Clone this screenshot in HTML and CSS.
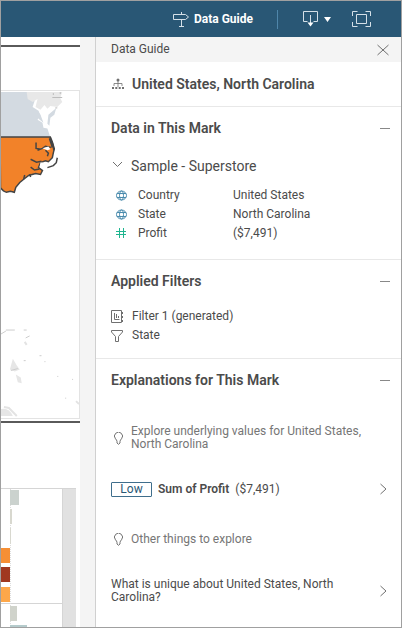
FILE: index.html
```html
<!DOCTYPE html>
<html lang="en">
<head>
    <meta charset="UTF-8">
    <meta name="viewport" content="width=device-width, initial-scale=1.0">
    <title>Data Guide</title>
    <link rel="stylesheet" href="styles.css">
</head>
<body>
    <header class="toolbar">
        <button class="guide-btn">
            <svg width="16" height="16" viewBox="0 0 16 16">
                <path d="M.5 3.500h12l3 2.500-3 2.500h-12zM8.500 1v2.500M8.500 8.500v6.500M6 15.500h5" />
            </svg>
            Data Guide
        </button>
        <span class="divider"></span>
        <button class="download" aria-label="Download">
            <svg width="28" height="16" viewBox="0 0 28 16">
                <path d="M4.500 10.500h-4v-10h14v10h-4M7.500 4v9" />
                <path class="solid" d="M4.500 11.500h6l-3 4zM21 6h7l-3.500 5z" />
            </svg>
        </button>
        <button class="fullscreen" aria-label="Full screen">
            <svg width="19" height="16" viewBox="0 0 19 16">
                <path d="M4.500 3.500h10v9h-10zM.5 5v-4.500h5M13.500.5h5v4.500M18.500 11v4.500h-5M5.500 15.500h-5v-4.500" />
            </svg>
        </button>
    </header>

    <main class="main">
        <!-- dashboard behind the panel -->
        <div class="dashboard">
            <div class="map">
                <svg width="79" height="329" viewBox="1 90 79 329">
                    <path fill="#d3dae1" d="M1 90h27l2 5 5 4-2 6 6 4 2 5-3 4 5 3 1 5 4 1 3 9H1z" />
                    <path fill="#e8e8e8" d="M27 90h36l-2 6 2 4-5 5-7-1-3 3-3-4-4 5-5-3 2-8-5 3-5-3z" />
                    <path fill="#d3dae1" d="M49 113l8-7-2 7-4 3-1 8-2-2zM44 121l-3-8-3-4 1 8z" />
                    <path stroke="#bbb" d="M53 95.500h10M54 91v2M61 92v-2M56 106h2" />
                    <path class="state" d="M0 135.500h51l2 5 2 7-1 4-1 5-4 4-3-1-5 2-2 5 4 3-2 4-5-1-7 2-4 3-5 4-4 5-1.500 5-4-1-4 1-3-1.500-3-3z" />
                    <path class="coast" d="M50.500 136l3 7 1 6M36.500 141v6l5 1M38 149l5-2 3-2 6 1M46 149l3 3-1 3M50 137l3 9M31 158l6 3 5-1M31 166l4 3 5-1M25 174l-1 4M30 173l1 3" />
                    <path fill="#fff" d="M43 147l6-2 2 3-3 1zM41 161l5 1-4 5-2-1z" />
                    <path class="coast" d="M48 166.500l6-2 3-3 1-5" />
                    <path fill="#e6e6e6" d="M13 360l4 7 3 4-5 2-5-2zM16 376l5 3 1 6-4-1z" />
                    <path fill="#e6e6e6" d="M1 411q8-2 12 7H1z" />
                    <path stroke="#e3e3e3" stroke-width="2" d="M4 409l5 1 8 8M25 343l2 3M77 403l3 3" />
                    <path stroke="#ccc" d="M1 335l5-3M6 331h9M26 339l4-2M24 331h3M11 372l7-2M40 357h2M45 363h1M58 378h1M73 381h1M66 400h1M24 362h2" />
                </svg>
            </div>
            <div class="chart">
                <svg width="79" height="139" viewBox="1 488 79 139">
                    <path fill="#e1e1e1" d="M63 488h13v139H63z" />
                    <path stroke="#d5d5d5" d="M1 488.500h75M62.500 488v139M1 603.500h62" />
                    <path stroke="#ddd" stroke-dasharray="1 1" d="M10.500 489v138" />
                    <path fill="#cbd2ce" d="M10 490h9v15h-9z" />
                    <path fill="#d8d8cf" d="M10 509h2v15h-2zM10 528h1v16h-1z" />
                    <path fill="#f68f35" d="M1 548h9v15H1z" />
                    <path fill="#a03820" d="M1 567h9v15H1z" />
                    <path fill="#fda74a" d="M1 587h9v15H1z" />
                    <path fill="#d0d3cb" d="M10 606h7v15h-7z" />
                    <path fill="#b5cbcc" d="M10 625h17v2H10z" />
                </svg>
            </div>
        </div>

        <aside class="panel">
            <div class="panel-head">
                <span>Data Guide</span>
                <button aria-label="Close">
                    <svg width="12" height="12" viewBox="0 0 12 12"><path d="M.5 1l11 10M11.500 1l-11 10" /></svg>
                </button>
            </div>

            <h1 class="mark">
                <svg width="12" height="12" viewBox="0 0 12 12">
                    <path stroke-width=".8" d="M6 2v7M2 8v-2.500h8V8" />
                    <circle class="solid" cx="6" cy="2" r="1.500" />
                    <path class="solid" d="M0 9h2v2H0zM3.300 9h2v2h-2zM6.700 9h2v2h-2zM10 9h2v2h-2z" />
                </svg>
                United States, North Carolina
            </h1>

            <section class="data">
                <div class="section-head">
                    <h2>Data in This Mark</h2>
                    <button class="collapse" aria-label="Collapse"></button>
                </div>
                <button class="source">
                    <svg width="12" height="12" viewBox="0 0 12 12"><path d="M2 2l4.500 4.500L11 2" /></svg>
                    Sample - Superstore
                </button>
                <table>
                    <tr>
                        <th><span><svg class="geo" width="11" height="11" viewBox="0 0 11 11"><ellipse cx="5.500" cy="5.500" rx="5" ry="4.500" /><path d="M1 3.500h9M1 7.500h9" /><ellipse cx="5.500" cy="5.500" rx="2" ry="4.500" /></svg>Country</span></th>
                        <td>United States</td>
                    </tr>
                    <tr>
                        <th><span><svg class="geo" width="11" height="11" viewBox="0 0 11 11"><ellipse cx="5.500" cy="5.500" rx="5" ry="4.500" /><path d="M1 3.500h9M1 7.500h9" /><ellipse cx="5.500" cy="5.500" rx="2" ry="4.500" /></svg>State</span></th>
                        <td>North Carolina</td>
                    </tr>
                    <tr>
                        <th><span><svg class="num" width="11" height="11" viewBox="0 0 11 11"><path d="M3.500 0v10M7.500 0v10M0 3.500h10M0 6.500h10" /></svg>Profit</span></th>
                        <td>($7,491)</td>
                    </tr>
                </table>
            </section>

            <section class="filters">
                <div class="section-head">
                    <h2>Applied Filters</h2>
                    <button class="collapse" aria-label="Collapse"></button>
                </div>
                <ul>
                    <li>
                        <svg width="13" height="13" viewBox="0 0 13 13"><path d="M.5.500h10v12h-10zM3.500 3v6.500h5M5.500 4v4M7.500 6v2M11.500 2v2M11.500 6v2M11.500 10v2" /></svg>
                        Filter 1 (generated)
                    </li>
                    <li>
                        <svg width="13" height="13" viewBox="0 0 13 13"><path d="M.5 1.500h11v1.500L7.500 7.500v5h-3v-5L.5 3z" /></svg>
                        State
                    </li>
                </ul>
            </section>

            <section class="explain">
                <div class="section-head">
                    <h2>Explanations for This Mark</h2>
                    <button class="collapse" aria-label="Collapse"></button>
                </div>
                <p class="hint">
                    <svg width="9" height="13" viewBox="0 0 9 13"><path d="M3 9.500Q2.800 8 1.500 6.800A4 4 0 1 1 7.500 6.800Q6.200 8 6 9.500V11L4.500 12.300 3 11z" /></svg>
                    Explore underlying values for United States, North Carolina
                </p>
                <button class="item">
                    <span class="low">Low</span>
                    <b>Sum of Profit</b>
                    <span>($7,491)</span>
                    <svg width="7" height="12" viewBox="0 0 7 12"><path d="M.5 1l5.500 5-5.500 5" /></svg>
                </button>
                <p class="hint">
                    <svg width="9" height="13" viewBox="0 0 9 13"><path d="M3 9.500Q2.800 8 1.500 6.800A4 4 0 1 1 7.500 6.800Q6.200 8 6 9.500V11L4.500 12.300 3 11z" /></svg>
                    Other things to explore
                </p>
                <button class="item last">
                    <span class="question">What is unique about United States, North Carolina?</span>
                    <svg width="7" height="12" viewBox="0 0 7 12"><path d="M.5 1l5.500 5-5.500 5" /></svg>
                </button>
            </section>
        </aside>
    </main>
</body>
</html>
```
FILE: styles.css
```css
* {
    box-sizing: border-box;
    margin: 0;
    padding: 0;
}

body {
    display: flex;
    flex-direction: column;
    min-height: 100vh;
    border: 1px solid #a0a0a0;
    font: 12px/13px Roboto, "Liberation Sans", sans-serif;
    color: #4b4b4b;
    background: #fff;
}

button {
    border: 0;
    background: none;
    font: inherit;
    color: inherit;
    text-align: left;
    cursor: pointer;
}

svg {
    display: block;
    flex: none;
    fill: none;
}

button svg,
.panel svg {
    stroke: #707070;
}

.solid {
    fill: #707070;
    stroke: none;
}

/* toolbar */
.toolbar {
    display: flex;
    align-items: center;
    justify-content: flex-end;
    height: 36px;
    padding-right: 30px;
    background: #295775;
}

.toolbar svg {
    stroke: #d5e0e8;
}

.toolbar .solid {
    fill: #fff;
}

.guide-btn {
    display: flex;
    align-items: center;
    gap: 5px;
    font-weight: 700;
    color: #fff;
}

.divider {
    width: 1px;
    height: 19px;
    margin: 0 25px 0 24px;
    background: #4f86aa;
}

.fullscreen {
    margin-left: 21px;
}

.main {
    display: flex;
    flex: 1;
}

/* dashboard */
.dashboard {
    flex: 1;
    min-width: 0;
    padding-top: 8px;
    border-right: 15px solid #f4f4f4;
}

.dashboard svg {
    margin-left: auto;
}

.map {
    padding: 43px 0 2px;
    border-top: 2px solid #5a5a5a;
    border-bottom: 2px solid #5a5a5a;
}

.map svg {
    border: 1px solid #e3e3e3;
    border-left: 0;
}

.chart {
    padding-top: 65px;
}

.state {
    fill: #f28229;
    stroke: #444;
    stroke-width: 1.5;
}

.coast {
    stroke: #444;
    stroke-width: 1.5;
}

/* data guide panel */
.panel {
    width: 306px;
    border-left: 1px solid #d0d0d0;
}

.panel-head {
    display: flex;
    align-items: center;
    justify-content: space-between;
    height: 25px;
    padding: 0 12px 0 15px;
    background: #f4f4f4;
}

.mark {
    display: flex;
    align-items: center;
    gap: 8px;
    height: 45px;
    padding-left: 16px;
    border-bottom: 1px solid #e8e8e8;
    font-size: 14px;
    font-weight: 600;
}

section {
    padding: 11px 11px 0 15px;
    border-bottom: 1px solid #e8e8e8;
}

.section-head {
    display: flex;
    align-items: center;
    justify-content: space-between;
    height: 20px;
}

h2 {
    font-size: 14px;
    font-weight: 600;
}

.collapse {
    width: 10px;
    height: 20px;
}

.collapse::before {
    content: '';
    display: block;
    height: 1px;
    background: #888;
}

.data {
    padding-bottom: 16px;
}

.source {
    display: flex;
    align-items: center;
    gap: 8px;
    height: 20px;
    margin: 18px 0 10px;
    font-size: 14px;
}

table {
    border-collapse: collapse;
}

tr {
    height: 19px;
}

th {
    width: 122px;
    font-weight: 400;
}

th span {
    display: flex;
    align-items: center;
    gap: 11px;
    padding-left: 5px;
}

.panel .geo {
    stroke: #4a8bad;
}

.panel .num {
    stroke: #1fb58f;
}

.filters {
    padding-bottom: 13px;
}

.filters ul {
    margin-top: 16px;
    list-style: none;
}

.filters li {
    display: flex;
    align-items: center;
    gap: 8px;
    height: 19px;
}

.explain {
    border-bottom: 0;
}

.hint {
    display: flex;
    align-items: center;
    gap: 8px;
    margin: 32px 0 26px;
    padding-left: 3px;
    color: #767676;
}

.section-head + .hint {
    margin-top: 35px;
}

.item {
    display: flex;
    align-items: center;
    width: 100%;
    min-height: 24px;
    padding-right: 3px;
}

.item.last {
    margin-top: 32px;
}

.item svg {
    margin-left: auto;
}

.item b {
    margin: 0 6px;
    font-weight: 600;
}

.low {
    width: 41px;
    border: 1px solid #3f6e8c;
    border-radius: 1px;
    text-align: center;
    color: #295775;
}

.question {
    width: 240px;
}
```
